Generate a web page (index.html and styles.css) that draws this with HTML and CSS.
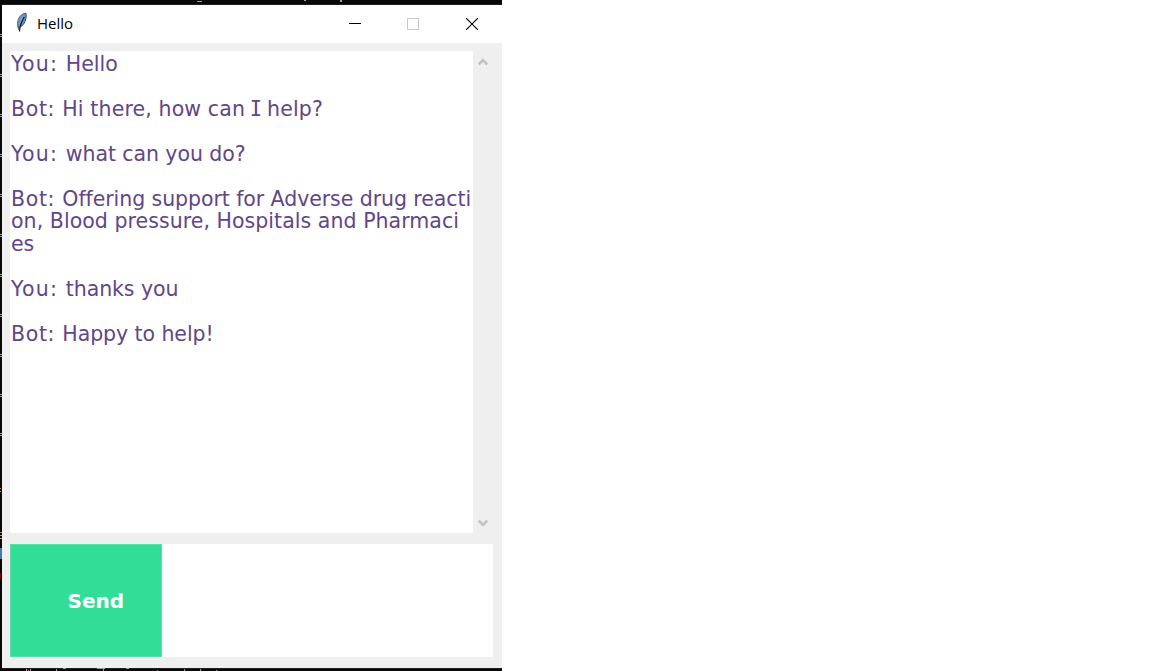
FILE: index.html
```html
<!DOCTYPE html>
<html lang="en">
<head>
<meta charset="utf-8">
<title>Hello</title>
<link rel="stylesheet" href="styles.css">
</head>
<body>
<div class="desktop">
  <svg class="backdrop" width="502" height="671" shape-rendering="crispEdges">
    <path class="edge" d="M2 4.5H502M2 668.5H502"/>
    <path class="mark" d="M0 34.5h2m-2 2h2M0 74.5h2m-2 2h2M0 114.5h2m-2 2h2M0 154.5h2m-2 2h2M0 194.5h2m-2 2h2M0 234.5h2m-2 2h2M0 274.5h2m-2 2h2M0 314.5h2m-2 2h2M0 354.5h2m-2 2h2M0 394.5h2m-2 2h2M0 433.5h2m-2 2h2M0 535.5h2m-2 3h2"/>
    <path class="mark" d="M197 1.5h5M304 .5h2M340 .5h2m-2 1h2"/>
    <path class="mark" d="M26.500 669v2M30.500 669v2M56.500 669v2M103.500 669v2M157.500 670v1M184.500 669v2M200.500 669v2M216.500 670v1M97 668.500h8M63 668.500h3M126 668.500h3"/>
    <path class="tan" d="M0 488.500h1m-1 3h1M0 532.500h2M28 669.500v1M184 669.500h1"/>
    <path class="blue" d="M0 548h2v11h-2z"/>
    <path class="red" d="M0 573h1v6h-1z"/>
  </svg>
  <main class="window">
    <header class="titlebar">
      <svg class="feather" width="14" height="21" viewBox="0 0 14 21">
        <path d="M4 18C2 14 1.800 8.500 5 4.500C7 2 9.500 1 11 1.400C11.800 4 10.800 8.500 9 11.500C7.500 13.500 5.800 15 4.500 15.500" fill="#5b8fc9" stroke="#3c4148" stroke-width=".9"/>
        <path d="M4.200 13C4.200 9 6 5 9.500 2.800L7 8Z" fill="#76afe8"/>
        <path d="M4.500 19.500C4.600 15 6 10.500 9.200 5" fill="none" stroke="#15191f" stroke-width="1.200"/>
        <path d="M2.500 14C2 10 4 5 9 1.800" fill="none" stroke="#8b8f92" stroke-width=".9"/>
      </svg>
      <h1 class="title">Hello</h1>
      <div class="controls">
        <svg width="12" height="12" shape-rendering="crispEdges"><path d="M0 5.500h12" stroke="#000"/></svg>
        <svg width="12" height="12"><rect x=".5" y=".5" width="11" height="11" fill="none" stroke="#c8c8c8"/></svg>
        <svg width="12" height="12"><path d="M0 0L12 12M12 0L0 12" stroke="#000" stroke-width="1.100"/></svg>
      </div>
    </header>
    <div class="chat">
      <section class="log">
        <p><span class="you">You: </span>Hello</p>
        <p><span class="bot">Bot: </span><span class="looser">Hi there, how can <span class="capital-i">I</span> help?</span></p>
        <p><span class="you">You: </span><span class="tight">what can you do?</span></p>
        <p><span class="bot">Bot: </span><span class="tight">Offering support for Adverse drug reacti</span><br><span class="loose">on, Blood pressure, Hospitals and Pharmaci</span><br>es</p>
        <p><span class="you">You: </span><span class="tight">thanks you</span></p>
        <p><span class="bot">Bot: </span><span class="tight">Happy to help!</span></p>
      </section>
      <div class="scrollbar">
        <svg width="10" height="8" viewBox="0 0 10 8"><path d="M.7 6.500L5 2.200L9.300 6.500" fill="none" stroke="#c3c3c3" stroke-width="2.600"/></svg>
        <svg width="10" height="8" viewBox="0 0 10 8"><path d="M.7 1.500L5 5.800L9.300 1.500" fill="none" stroke="#c3c3c3" stroke-width="2.600"/></svg>
      </div>
    </div>
    <div class="composer">
      <button class="send" type="button">Send</button>
      <div class="entry" contenteditable="true"></div>
    </div>
  </main>
</div>
</body>
</html>
```
FILE: styles.css
```css
* { box-sizing: border-box; }
body { margin: 0; background: #fff; }
.desktop { position: relative; width: 502px; height: 671px; padding: 5px 0 3px 2px; background: #080808; }
.backdrop { position: absolute; left: 0; top: 0; }
.backdrop path { fill: none; stroke-width: 1; }
.backdrop .edge { stroke: #202020; }
.backdrop .mark { stroke: #a0a0a0; }
.backdrop .tan { stroke: #bc8650; }
.backdrop .blue { fill: #427caf; }
.backdrop .red { fill: #640d0d; }
.window { position: relative; height: 663px; background: #efefef; }
.titlebar { display: flex; height: 38px; padding-left: 13px; background: #fff; }
.feather { margin-top: 7px; }
.title { margin: 0 0 0 8px; font: 400 15px/37px "Open Sans", "Noto Sans", sans-serif; color: #000; }
.controls { display: flex; gap: 46px; margin: 13px 24px 0 auto; }
.controls svg { display: block; }
.controls svg:nth-child(2) { margin-right: 1px; }
.chat { display: flex; height: 482px; margin: 8px 9px 0 8px; }
.log { width: 463px; padding: 1.500px 0 0 1px; background: #fff; color: #61468a; font: 20.5px/22.5px "DejaVu Sans", Verdana, sans-serif; font-variant-ligatures: none; white-space: nowrap; }
.log p { margin: 0 0 22.5px; }
.you { letter-spacing: 1.200px; }
.bot { letter-spacing: .65px; }
.tight { letter-spacing: -.07px; }
.loose { letter-spacing: .05px; }
.looser { letter-spacing: .13px; }
.capital-i { margin: 0 -1.900px; font-family: "DejaVu Sans Mono", monospace; }
.scrollbar { display: flex; flex-direction: column; justify-content: space-between; width: 20px; padding: 7px 0 6px 4.500px; }
.composer { display: flex; height: 113px; margin: 11px 9px 0 7.500px; }
.send { width: 152.500px; padding: 0 0 0 20px; border: 1px solid #58dfa8; background: #32de97; color: #fff; font: 700 20px/24px "DejaVu Sans", Verdana, sans-serif; }
.entry { flex: 1; background: #fff; }
```
